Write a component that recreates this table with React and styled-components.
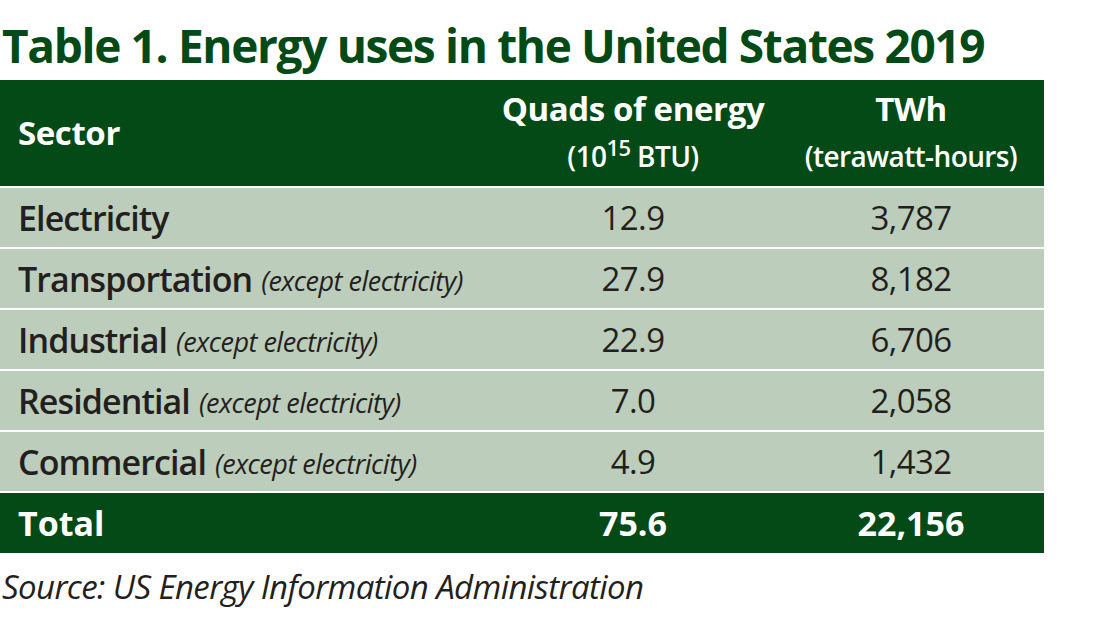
import React from "react";
import styled, {createGlobalStyle} from "styled-components";

const GlobalStyle = createGlobalStyle`
  body {
    margin: 0;
    background: #ffffff;
    font-family: "Open Sans", "Noto Sans", sans-serif;
  }
`;

const Page = styled.div`
  width: 1102px;
  height: 618px;
  overflow: hidden;
`;

const Title = styled.h1`
  margin: 0;
  padding: 16px 0 0 2px;
  height: 80px;
  box-sizing: border-box;
  font-size: 46px;
  line-height: 58px;
  font-weight: 700;
  letter-spacing: -1.35px;
  color: #034a17;
  white-space: nowrap;
`;

const Table = styled.div`
  width: 1044px;
  display: grid;
  grid-template-columns: 488px 290px 266px;
  row-gap: 2px;
  background: #ffffff;
`;

const Row = styled.div`
  display: contents;
`;

const Cell = styled.div`
  display: flex;
  align-items: center;
  justify-content: ${p => (p.$align === "left" ? "flex-start" : "center")};
  flex-direction: ${p => (p.$stack ? "column" : "row")};
  height: ${p => p.$h || 59}px;
  padding-left: ${p => (p.$align === "left" ? "18px" : "0")};
  background: ${p => (p.$dark ? "#034a17" : "#bccdbb")};
  color: ${p => (p.$dark ? "#ffffff" : "#231f20")};
  font-size: ${p => (p.$bold ? 34 : 33)}px;
  font-weight: ${p => (p.$bold ? 700 : 400)};
  letter-spacing: ${p => (p.$bold ? "0" : "-0.6px")};
  white-space: nowrap;
`;

const Label = styled.span`
  font-size: 34px;
  font-weight: 600;
  letter-spacing: -0.9px;
`;

const Note = styled.span`
  font-style: italic;
  font-size: 27px;
  font-weight: 400;
  margin-left: 9px;
  letter-spacing: -0.5px;
  padding-top: 3px;
`;

const HeadMain = styled.span`
  font-size: 33px;
  line-height: 38px;
  font-weight: 700;
  letter-spacing: -0.4px;
`;

const HeadSub = styled.span`
  margin-top: 8px;
  font-size: 28px;
  line-height: 40px;
  font-weight: 600;
  letter-spacing: -0.6px;

  sup {
    font-size: 22px;
    line-height: 0;
    vertical-align: 11px;
  }
`;

const Source = styled.p`
  margin: 12px 0 0 2px;
  font-size: 33px;
  line-height: 44px;
  font-style: italic;
  color: #231f20;
  letter-spacing: -0.6px;
  white-space: nowrap;
`;

const rows = [
  {name: "Electricity", note: null, quads: "12.9", twh: "3,787"},
  {name: "Transportation", note: "(except electricity)", quads: "27.9", twh: "8,182"},
  {name: "Industrial", note: "(except electricity)", quads: "22.9", twh: "6,706"},
  {name: "Residential", note: "(except electricity)", quads: "7.0", twh: "2,058"},
  {name: "Commercial", note: "(except electricity)", quads: "4.9", twh: "1,432"},
];

const App = () => {
  return (
    <Page>
      <GlobalStyle />
      <Title>Table 1. Energy uses in the United States 2019</Title>
      <Table>
        <Row>
          <Cell $dark $align="left" $h={106}>
            <HeadMain>Sector</HeadMain>
          </Cell>
          <Cell $dark $stack $h={106}>
            <HeadMain>Quads of energy</HeadMain>
            <HeadSub>(10<sup>15</sup> BTU)</HeadSub>
          </Cell>
          <Cell $dark $stack $h={106}>
            <HeadMain>TWh</HeadMain>
            <HeadSub>(terawatt-hours)</HeadSub>
          </Cell>
        </Row>
        {rows.map(r => (
          <Row key={r.name}>
            <Cell $align="left">
              <Label>{r.name}</Label>
              {r.note && <Note>{r.note}</Note>}
            </Cell>
            <Cell>{r.quads}</Cell>
            <Cell>{r.twh}</Cell>
          </Row>
        ))}
        <Row>
          <Cell $dark $bold $align="left" $h={60}>Total</Cell>
          <Cell $dark $bold $h={60}>75.6</Cell>
          <Cell $dark $bold $h={60}>22,156</Cell>
        </Row>
      </Table>
      <Source>Source: US Energy Information Administration</Source>
    </Page>
  );
};

export default App;
